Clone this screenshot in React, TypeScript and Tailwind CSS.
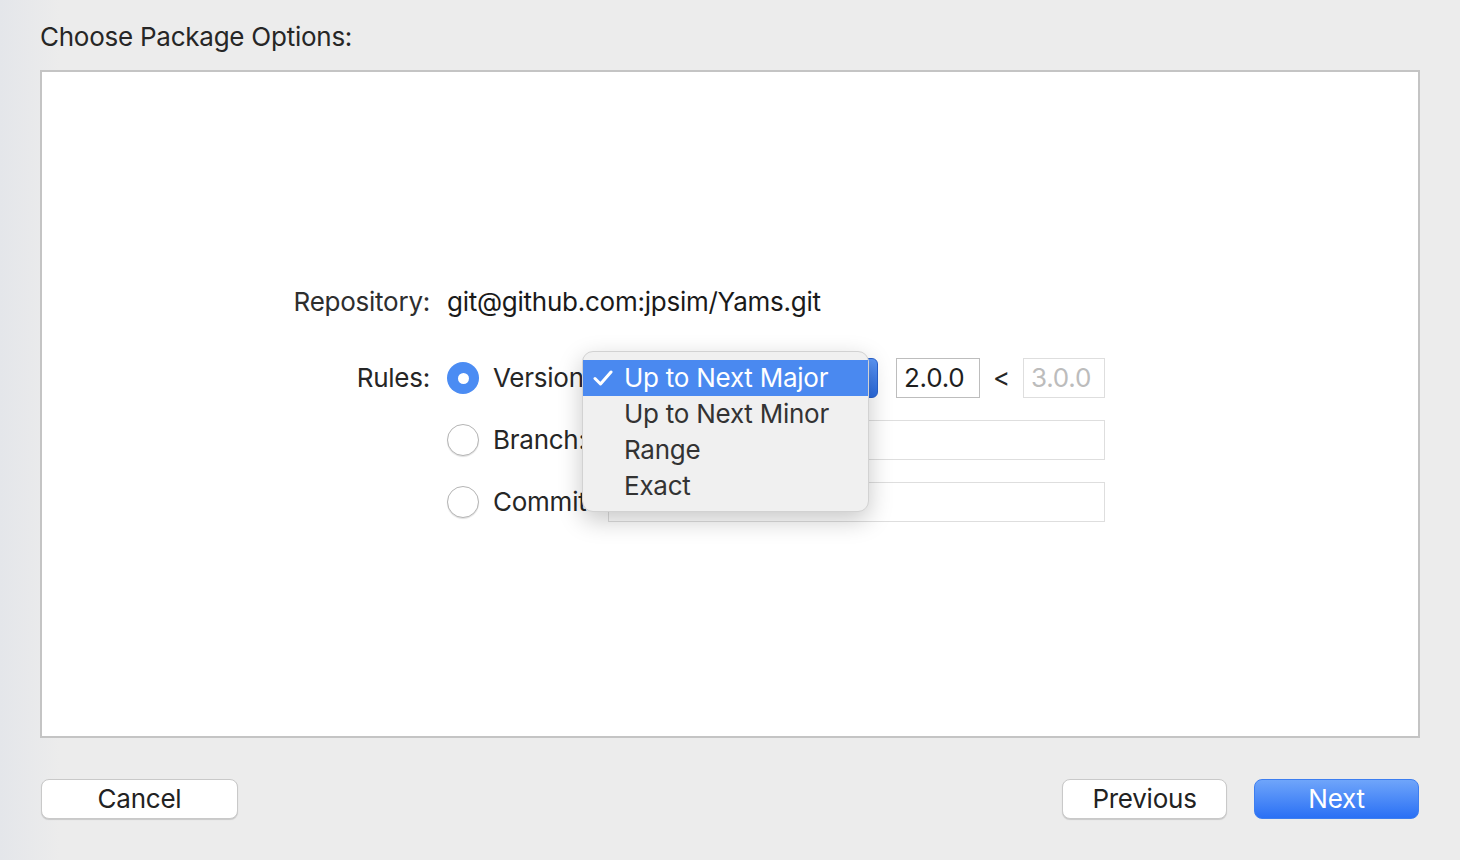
import React from "react";

const font = { fontFamily: "Inter, 'Liberation Sans', sans-serif" };

function Radio({ on }: { on?: boolean }) {
  if (on)
    return (
      <div className="w-[32px] h-[32px] rounded-full bg-[#4b8cf3] flex items-center justify-center shrink-0">
        <div className="w-[11px] h-[11px] rounded-full bg-white" />
      </div>
    );
  return (
    <div className="w-[32px] h-[32px] rounded-full bg-white border border-[#b5b5b5] shadow-[0_1px_1px_rgba(0,0,0,0.12)] shrink-0" />
  );
}

export default function App() {
  return (
    <div
      className="w-[1460px] h-[860px] bg-[linear-gradient(to_right,#e4e6ea_0px,#ececec_60px)] flex flex-col text-[#262626] text-[26px] leading-none tracking-[-0.25px]"
      style={font}
    >
      <div className="pl-[40px] pt-[24px] h-[70px]">Choose Package Options:</div>
      <div className="mx-[40px] h-[668px] border-2 border-[#c4c4c4] bg-white relative">
        <div className="pt-[210px] flex flex-col">
          <div className="h-[40px] flex items-center">
            <div className="w-[388px] text-right text-[#2e2e2e]">Repository:</div>
            <div className="ml-[17px] text-[#1a1a1a]">git@github.com:jpsim/Yams.git</div>
          </div>
          <div className="h-[40px] mt-[36px] flex items-center">
            <div className="w-[388px] text-right">Rules:</div>
            <div className="ml-[17px] w-[161px] flex items-center gap-[14px]">
              <Radio on />
              <span>Version:</span>
            </div>
            <div className="relative">
              <div className="w-[270px] h-[40px] rounded-[6px] bg-[linear-gradient(to_bottom,#5b96f6,#2b6be0)] border border-[#2a62cc]" />
              <div className="absolute left-[-26px] top-[-7px] w-[287px] h-[161px] rounded-[11px] bg-[#f0f0f0] border border-[#d2d2d2] shadow-[0_8px_24px_rgba(0,0,0,0.22)] pt-[8px] text-[#333333]">
                <div className="h-[36px] bg-[#4a89f0] text-white flex items-center">
                  <svg width="20" height="16" viewBox="0 0 20 16" className="ml-[10px] mr-[11px]">
                    <path d="M2 8.5 L7.5 14 L18 2" fill="none" stroke="white" strokeWidth="3" strokeLinecap="round" strokeLinejoin="round" />
                  </svg>
                  <span>Up to Next Major</span>
                </div>
                <div className="h-[36px] flex items-center pl-[41px]">Up to Next Minor</div>
                <div className="h-[36px] flex items-center pl-[41px]">Range</div>
                <div className="h-[36px] flex items-center pl-[41px]">Exact</div>
              </div>
            </div>
            <div className="ml-[18px] w-[84px] h-[40px] border border-[#bdbdbd] flex items-center pl-[7px] text-[#1f1f1f]">2.0.0</div>
            <div className="w-[43px] flex justify-center">&lt;</div>
            <div className="w-[82px] h-[40px] border border-[#dedede] flex items-center pl-[7px] text-[#bcbcbc]">3.0.0</div>
          </div>
          <div className="h-[40px] mt-[22px] flex items-center">
            <div className="ml-[405px] w-[161px] flex items-center gap-[14px]">
              <Radio />
              <span>Branch:</span>
            </div>
            <div className="w-[497px] h-[40px] border border-[#dedede]" />
          </div>
          <div className="h-[40px] mt-[22px] flex items-center">
            <div className="ml-[405px] w-[161px] flex items-center gap-[14px]">
              <Radio />
              <span>Commit:</span>
            </div>
            <div className="w-[497px] h-[40px] border border-[#dedede]" />
          </div>
        </div>
      </div>
      <div className="flex items-center mt-[41px] px-[41px]">
        <button className="w-[197px] h-[40px] rounded-[8px] bg-white border border-[#c9c9c9] shadow-[0_1px_1px_rgba(0,0,0,0.15)] text-[#222]">Cancel</button>
        <div className="flex-1" />
        <button className="w-[165px] h-[40px] rounded-[8px] bg-white border border-[#c9c9c9] shadow-[0_1px_1px_rgba(0,0,0,0.15)] text-[#222]">Previous</button>
        <button className="ml-[27px] w-[165px] h-[40px] rounded-[8px] bg-[linear-gradient(to_bottom,#6fa5fa,#2a70f5)] border border-[#3d7ef0] text-white">Next</button>
      </div>
    </div>
  );
}
